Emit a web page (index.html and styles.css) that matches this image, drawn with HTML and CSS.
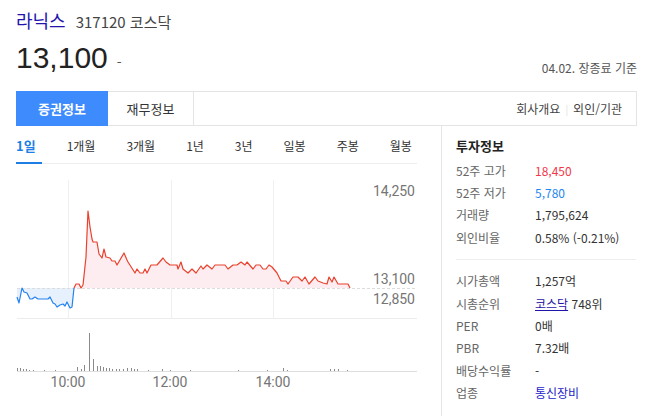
FILE: index.html
```html
<!DOCTYPE html>
<html lang="ko">
<head>
<meta charset="utf-8">
<title>라닉스</title>
<link rel="stylesheet" href="styles.css">
</head>
<body>
<div class="page">
  <div class="title-row">
    <a class="name" href="#">라닉스</a>
    <span class="code">317120 코스닥</span>
  </div>
  <div class="price-row">
    <span class="price">13,100</span>
    <span class="change">-</span>
    <span class="date">04.02. 장종료 기준</span>
  </div>
  <div class="tabbar">
    <a class="tab active" href="#">증권정보</a>
    <a class="tab" href="#">재무정보</a>
    <div class="links">
      <a href="#">회사개요</a><span class="sep">|</span><a href="#">외인/기관</a>
    </div>
  </div>
  <div class="main">
    <div class="chart-col">
      <div class="periods">
        <span class="period on">1일</span>
        <span class="period">1개월</span>
        <span class="period">3개월</span>
        <span class="period">1년</span>
        <span class="period">3년</span>
        <span class="period">일봉</span>
        <span class="period">주봉</span>
        <span class="period">월봉</span>
      </div>
      <svg class="chart" width="425" height="236" viewBox="16 164 425 236">
        <g stroke="#f0f0f0" stroke-width="1">
          <line x1="68.5" y1="180" x2="68.5" y2="318"/>
          <line x1="171.5" y1="180" x2="171.5" y2="318"/>
          <line x1="273.5" y1="180" x2="273.5" y2="318"/>
        </g>
        <line x1="17" y1="318.5" x2="417" y2="318.5" stroke="#ececec"/>
        <polygon fill="#e6f1fd" points="17,288 17,297 19,303 22,288 24,292 27,293 30,299 32,299 35,297 38,299 48,299 50,297 53,303 55,304 57,307 60,305 63,304 65,306 67,302 70,308 72,307 74,288"/>
        <polygon fill="#fdedf0" points="74,288 76,284 79,284 81,288 83,285 86,257 88,211 90,227 92,239 93,242 97,242 99,254 102,258 104,249 106,257 110,258 112,261 115,261 117,265 124,253 127,260 128,262 135,273 137,269 140,273 143,273 145,269 147,273 151,265 157,265 163,258 166,262 170,265 177,265 178,269 181,262 183,269 188,273 192,269 196,273 201,266 203,269 207,265 212,269 215,265 225,265 228,269 233,265 237,265 241,262 245,265 247,262 253,269 256,265 260,265 263,269 266,269 269,265 272,267 277,273 281,281 286,281 288,284 293,277 298,277 302,281 305,277 309,284 315,277 318,281 323,283 327,284 329,277 332,282 334,277 338,284 348,284 350,288"/>
        <line x1="17" y1="288.5" x2="417" y2="288.5" stroke="#dcdcdc" stroke-dasharray="3 2"/>
        <polyline fill="none" stroke="#2381f0" stroke-width="1.2" stroke-linejoin="round" points="17,297 19,303 22,288 24,292 27,293 30,299 32,299 35,297 38,299 48,299 50,297 53,303 55,304 57,307 60,305 63,304 65,306 67,302 70,308 72,307 74,288"/>
        <polyline fill="none" stroke="#e9412d" stroke-width="1.2" stroke-linejoin="round" points="74,288 76,284 79,284 81,288 83,285 86,257 88,211 90,227 92,239 93,242 97,242 99,254 102,258 104,249 106,257 110,258 112,261 115,261 117,265 124,253 127,260 128,262 135,273 137,269 140,273 143,273 145,269 147,273 151,265 157,265 163,258 166,262 170,265 177,265 178,269 181,262 183,269 188,273 192,269 196,273 201,266 203,269 207,265 212,269 215,265 225,265 228,269 233,265 237,265 241,262 245,265 247,262 253,269 256,265 260,265 263,269 266,269 269,265 272,267 277,273 281,281 286,281 288,284 293,277 298,277 302,281 305,277 309,284 315,277 318,281 323,283 327,284 329,277 332,282 334,277 338,284 348,284 350,288"/>
        <g class="axis" text-anchor="end">
          <text x="415" y="196">14,250</text>
          <text x="415" y="284">13,100</text>
          <text x="415" y="304">12,850</text>
        </g>
        <line x1="17" y1="371.5" x2="417" y2="371.5" stroke="#dedede"/>
        <g stroke="#8a8a8a" stroke-width="1">
          <line x1="17.5" y1="371" x2="17.5" y2="368"/>
          <line x1="20.5" y1="371" x2="20.5" y2="368"/>
          <line x1="23.5" y1="371" x2="23.5" y2="369"/>
          <line x1="26.5" y1="371" x2="26.5" y2="369"/>
          <line x1="29.5" y1="371" x2="29.5" y2="370"/>
          <line x1="33.5" y1="371" x2="33.5" y2="370"/>
          <line x1="44.5" y1="371" x2="44.5" y2="370"/>
          <line x1="55.5" y1="371" x2="55.5" y2="370"/>
          <line x1="77.5" y1="371" x2="77.5" y2="367"/>
          <line x1="81.5" y1="371" x2="81.5" y2="369"/>
          <line x1="84.5" y1="371" x2="84.5" y2="365"/>
          <line x1="89.5" y1="371" x2="89.5" y2="333"/>
          <line x1="93.5" y1="371" x2="93.5" y2="359"/>
          <line x1="97.5" y1="371" x2="97.5" y2="366"/>
          <line x1="100.5" y1="371" x2="100.5" y2="366"/>
          <line x1="103.5" y1="371" x2="103.5" y2="367"/>
          <line x1="106.5" y1="371" x2="106.5" y2="368"/>
          <line x1="109.5" y1="371" x2="109.5" y2="368"/>
          <line x1="112.5" y1="371" x2="112.5" y2="369"/>
          <line x1="116.5" y1="371" x2="116.5" y2="369"/>
          <line x1="119.5" y1="371" x2="119.5" y2="369"/>
          <line x1="123.5" y1="371" x2="123.5" y2="369"/>
          <line x1="127.5" y1="371" x2="127.5" y2="368"/>
          <line x1="131.5" y1="371" x2="131.5" y2="368"/>
          <line x1="134.5" y1="371" x2="134.5" y2="369"/>
          <line x1="137.5" y1="371" x2="137.5" y2="369"/>
          <line x1="148.5" y1="371" x2="148.5" y2="370"/>
          <line x1="162.5" y1="371" x2="162.5" y2="369"/>
          <line x1="170.5" y1="371" x2="170.5" y2="370"/>
          <line x1="190.5" y1="371" x2="190.5" y2="370"/>
          <line x1="238.5" y1="371" x2="238.5" y2="370"/>
          <line x1="267.5" y1="371" x2="267.5" y2="370"/>
          <line x1="283.5" y1="371" x2="283.5" y2="368"/>
          <line x1="287.5" y1="371" x2="287.5" y2="370"/>
          <line x1="330.5" y1="371" x2="330.5" y2="369"/>
          <line x1="334.5" y1="371" x2="334.5" y2="369"/>
          <line x1="338.5" y1="371" x2="338.5" y2="369"/>
          <line x1="347.5" y1="371" x2="347.5" y2="370"/>
        </g>
        <g class="axis" text-anchor="middle">
          <text x="68" y="387">10:00</text>
          <text x="170" y="387">12:00</text>
          <text x="273" y="387">14:00</text>
        </g>
      </svg>
    </div>
    <div class="info">
      <h3 class="info-title">투자정보</h3>
      <dl class="rows">
        <div class="row"><dt>52주 고가</dt><dd class="up">18,450</dd></div>
        <div class="row"><dt>52주 저가</dt><dd class="down">5,780</dd></div>
        <div class="row"><dt>거래량</dt><dd>1,795,624</dd></div>
        <div class="row"><dt>외인비율</dt><dd>0.58% (-0.21%)</dd></div>
      </dl>
      <dl class="rows second">
        <div class="row"><dt>시가총액</dt><dd>1,257억</dd></div>
        <div class="row"><dt>시총순위</dt><dd><a class="ul" href="#">코스닥</a> 748위</dd></div>
        <div class="row"><dt>PER</dt><dd>0배</dd></div>
        <div class="row"><dt>PBR</dt><dd>7.32배</dd></div>
        <div class="row"><dt>배당수익률</dt><dd>-</dd></div>
        <div class="row"><dt>업종</dt><dd><a class="ind" href="#">통신장비</a></dd></div>
      </dl>
    </div>
  </div>
</div>
</body>
</html>
```

FILE: styles.css
```css
* { box-sizing: border-box; }
html, body { margin: 0; padding: 0; background: #fff; }
body {
  width: 651px;
  height: 416px;
  overflow: hidden;
  font-family: "Noto Sans CJK KR", "Noto Sans", sans-serif;
  color: #333;
}
a { text-decoration: none; color: inherit; }
.page { padding: 9px 14px 0 16px; }

.title-row {
  display: flex;
  align-items: baseline;
  height: 22px;
  line-height: 22px;
}
.name { font-size: 18px; color: #2314ae; }
.code { font-size: 15px; color: #444; margin-left: 10px; }

.price-row {
  display: flex;
  align-items: baseline;
  margin-top: 10px;
  height: 34px;
}
.price {
  font-family: "Liberation Sans", Arial, sans-serif;
  font-size: 30px;
  line-height: 34px;
  color: #222;
}
.change { font-size: 14px; color: #555; margin-left: 9px; }
.date {
  margin-left: auto;
  align-self: flex-end;
  font-size: 12px;
  line-height: 16px;
  margin-bottom: -1px;
  color: #555;
}

.tabbar {
  display: flex;
  margin-top: 16px;
  height: 35px;
  border: 1px solid #e4e4e4;
  border-left: 0;
}
.tab {
  width: 86px;
  display: flex;
  align-items: center;
  justify-content: center;
  font-size: 13px;
  color: #333;
  border-right: 1px solid #e4e4e4;
}
.tab.active {
  width: 92px;
  margin-top: -1px;
  margin-bottom: -1px;
  background: #3d8bfd;
  color: #fff;
  font-weight: bold;
  border-right: 0;
}
.links {
  margin-left: auto;
  display: flex;
  align-items: center;
  padding-right: 14px;
  font-size: 12px;
  color: #444;
}
.sep { color: #ddd; font-size: 10px; margin: 0 5px; }

.main { display: flex; }
.chart-col { width: 425px; }
.periods {
  position: relative;
  display: flex;
  gap: 31px;
  width: 401px;
  height: 38px;
  padding-top: 12px;
  font-size: 12px;
  line-height: 16px;
  color: #333;
  border-bottom: 1px solid #eeeeee;
}
.period.on { color: #1d7fe6; font-weight: bold; font-size: 13px; }
.period.on::after {
  content: "";
  position: absolute;
  left: 0;
  bottom: -1px;
  width: 26px;
  height: 2px;
  background: #1d7fe6;
}
.chart { display: block; }
.axis {
  font-family: Roboto, "Liberation Sans", sans-serif;
  font-size: 14px;
  fill: #757575;
}

.info {
  flex: 1;
  border-left: 1px solid #e6e6e6;
  padding: 10px 0 0 14px;
  height: 291px;
}
.info-title {
  margin: 0;
  font-size: 13px;
  line-height: 20px;
  font-weight: bold;
  color: #222;
}
.rows {
  margin: 3px 0 0 0;
  width: 180px;
  padding-bottom: 10px;
  border-bottom: 1px solid #eeeeee;
}
.rows.second { margin-top: 10px; border-bottom: 0; }
.row { display: flex; height: 22.4px; align-items: center; font-size: 12px; }
.row dt { width: 79px; color: #666; }
.row dd { margin: 0; color: #333; }
.up { color: #f0384a !important; }
.down { color: #1e87f0 !important; }
.ul { text-decoration: underline; color: #1f15a8; }
.ind { color: #2323c8; }
```
